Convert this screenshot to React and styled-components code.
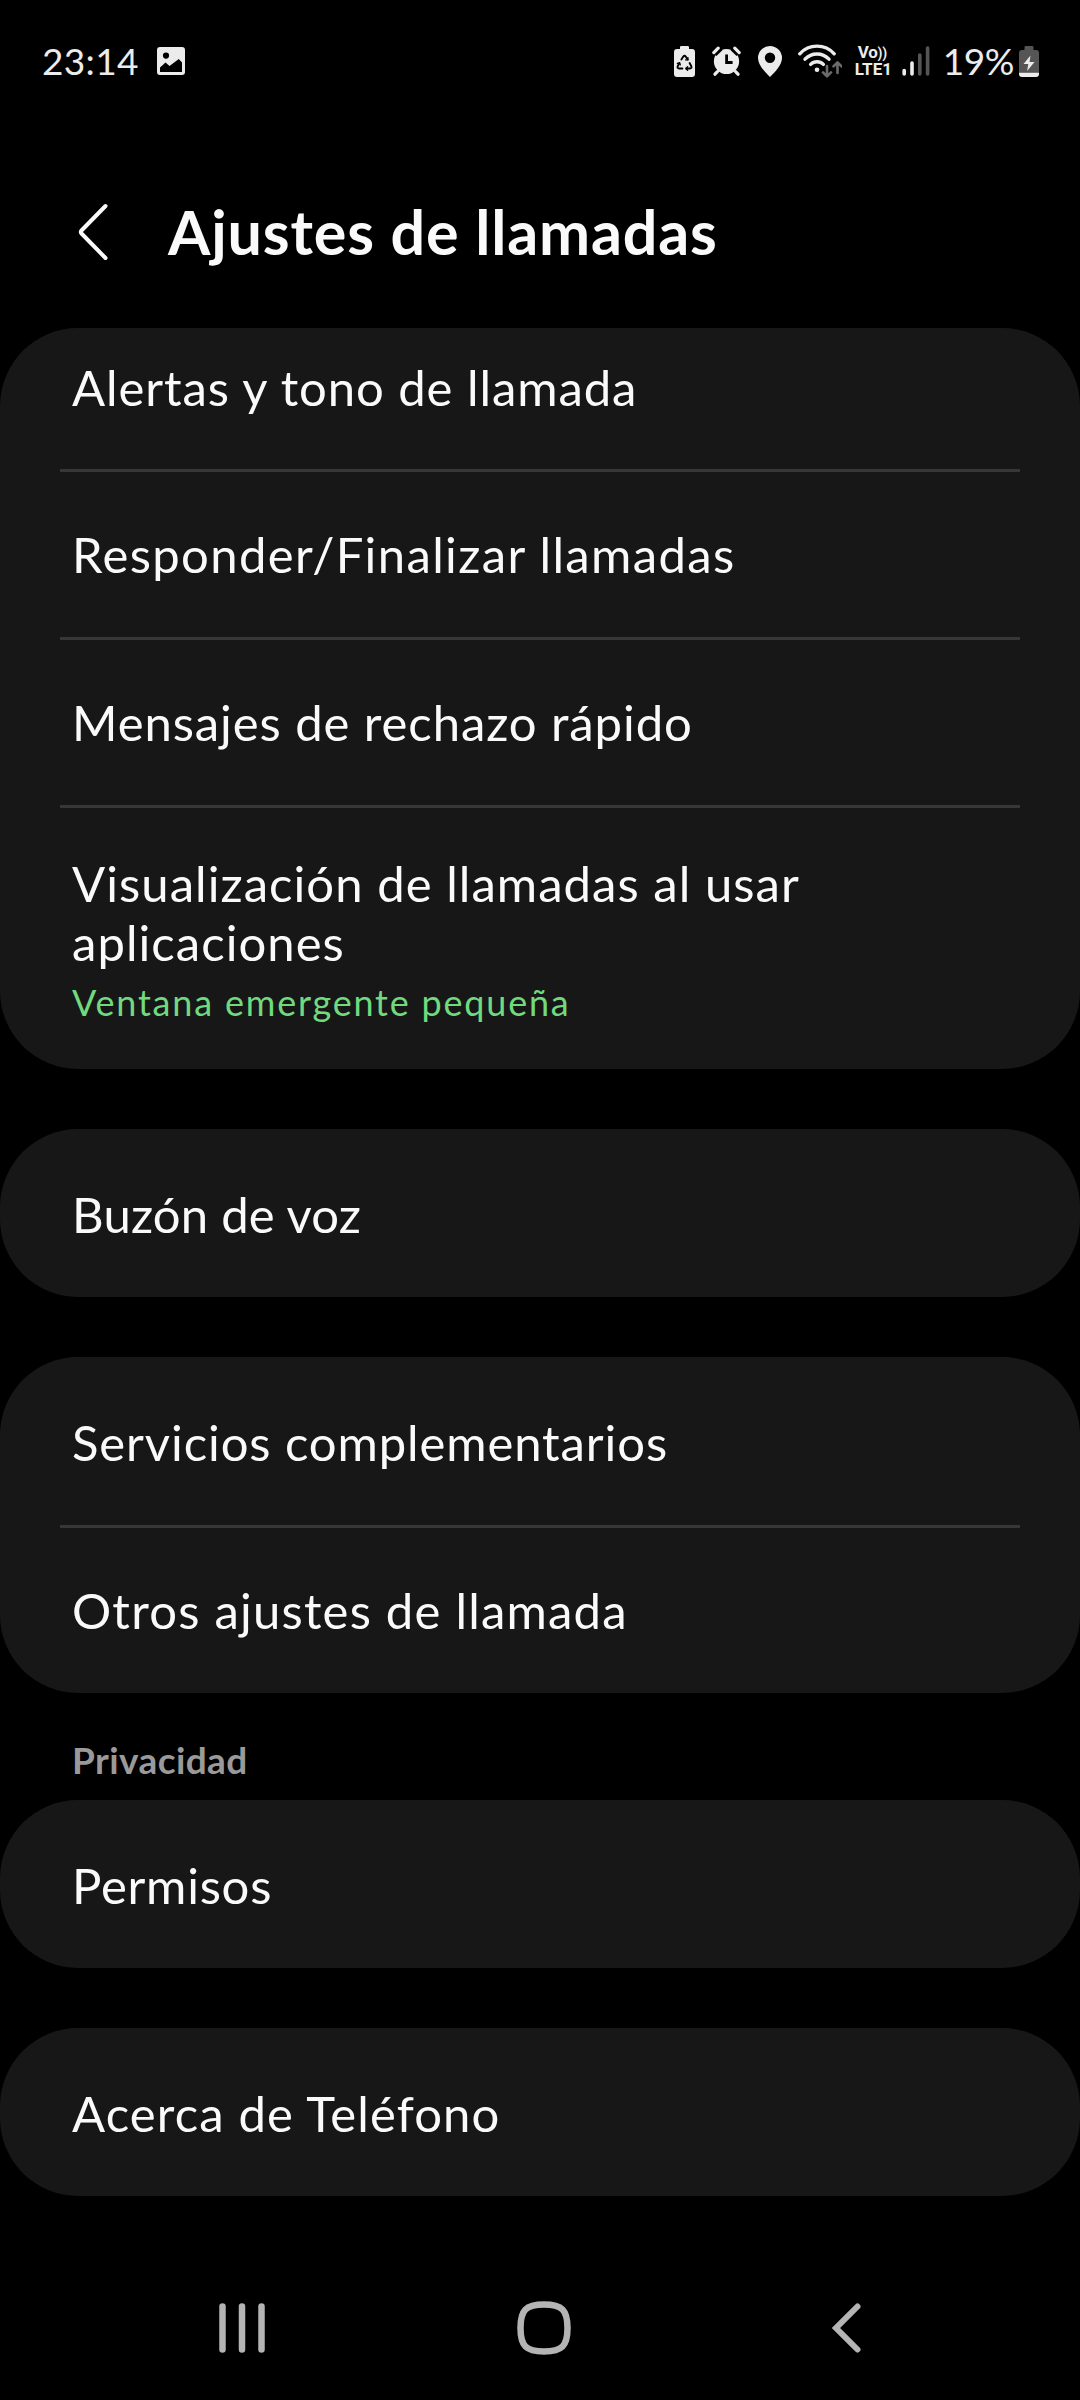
import styled, { createGlobalStyle, css } from "styled-components";

const GlobalStyle = createGlobalStyle`
  * {
    box-sizing: border-box;
  }

  body {
    margin: 0;
    background-color: #000;
    font-family: Lato, "Open Sans", sans-serif;
    color: #fafafa;
  }

  svg {
    display: block;
    flex: none;
  }
`;

const Screen = styled.div`
  display: flex;
  flex-direction: column;
  width: 1080px;
  height: 2400px;
  background-color: #000;
  overflow: hidden;
`;

const StatusBar = styled.div`
  display: flex;
  justify-content: space-between;
  align-items: center;
  height: 122px;
  padding: 0 41px 0 42px;
  color: #ececec;
`;

const StatusGroup = styled.div`
  display: flex;
  align-items: center;
`;

const StatusText = styled.span`
  font-size: 37px;
  line-height: 44px;
  letter-spacing: ${props => props.$spacing || 0}px;
`;

const ImageIcon = styled.svg`
  margin-left: 18px;
`;

const IconStrip = styled.div`
  display: flex;
  align-items: center;
  gap: 17px;

  svg:nth-child(4) {
    margin-left: -1px;
  }
`;

const VolteBadge = styled.div`
  display: flex;
  flex-direction: column;
  width: 40px;
  margin-left: 13px;
  font-family: Roboto, sans-serif;
  font-size: 17px;
  font-weight: 700;
  line-height: 17px;
  white-space: nowrap;
`;

const VolteTop = styled.span`
  height: 17px;
  padding-left: 3px;
  letter-spacing: -.3px;

  small {
    font-size: 14px;
    line-height: 14px;
  }
`;

const SignalBars = styled.svg`
  margin-left: 7px;
`;

const Percent = styled(StatusText)`
  margin-left: 13px;
`;

const ChargingIcon = styled.svg`
  margin-left: 5px;
`;

const Header = styled.header`
  display: flex;
  align-items: center;
  height: 206px;
  padding: 14px 72px 0 77px;
`;

const Title = styled.h1`
  margin: 0 0 0 59px;
  font-size: 61px;
  font-weight: 700;
  line-height: 74px;
  letter-spacing: .86px;
`;

const List = styled.main`
  display: flex;
  flex-direction: column;
`;

const Card = styled.section`
  padding: 0 60px;
  background-color: #171717;
  border-radius: 78px;

  & + & {
    margin-top: 60px;
  }
`;

const Row = styled.div`
  display: flex;
  flex-direction: column;
  justify-content: center;
  height: ${props => props.$height || 168}px;
  padding: ${props => props.$padding || "2px 12px 0"};

  & + & {
    box-shadow: inset 0 3px #373737;
  }
`;

const rowText = css`
  letter-spacing: ${props => props.$spacing}px;
  white-space: pre-line;
`;

const RowTitle = styled.span`
  ${rowText}
  font-size: 49px;
  line-height: 59px;
`;

const RowValue = styled.span`
  ${rowText}
  margin-top: 8px;
  color: #71d97e;
  font-size: 36px;
  line-height: 44px;
`;

const SectionLabel = styled.h2`
  height: 107px;
  margin: 0;
  padding: 45px 72px 0;
  color: #9a9a9a;
  font-size: 37px;
  font-weight: 700;
  line-height: 44px;
  letter-spacing: .4px;
`;

const NavBar = styled.nav`
  display: flex;
  justify-content: space-between;
  align-items: center;
  height: 144px;
  margin-top: auto;
  padding: 0 218px;
`;

const cards = [
  [
    { title: "Alertas y tono de llamada", spacing: .93, height: 141, padding: "0 12px 23px" },
    { title: "Responder/Finalizar llamadas", spacing: 1.36 },
    { title: "Mensajes de rechazo rápido", spacing: .92 },
    {
      title: "Visualización de llamadas al usar\naplicaciones",
      spacing: 1.05,
      value: "Ventana emergente pequeña",
      height: 264,
      padding: "4px 12px 0",
    },
  ],
  [{ title: "Buzón de voz", spacing: .22 }],
  [
    { title: "Servicios complementarios", spacing: .9 },
    { title: "Otros ajustes de llamada", spacing: 1.22 },
  ],
];

const privacyCards = [
  [{ title: "Permisos", spacing: .75 }],
  [{ title: "Acerca de Teléfono", spacing: 1.13 }],
];

function StatusIcons () {
  return (
    <IconStrip>
      {/* battery saver */}
      <svg width="21" height="31" viewBox="0 0 21 31">
        <path fill="#ececec" d="M6 3V1.2Q6 0 7.2 0h6.6Q15 0 15 1.2V3h3q3 0 3 3v22q0 3-3 3H3q-3 0-3-3V6q0-3 3-3z" />
        <g fill="none" stroke="#000" strokeWidth="1.9" strokeLinecap="round" strokeLinejoin="round">
          <path d="M7.4 13.6 9.3 10.6q1.2-1.6 2.4 0l1.9 3M15.6 17l1.7 3.2q.8 2.2-1.4 2.3h-3.6M8.4 22.5H5.1q-2.2-.1-1.4-2.3L5.400 17" />
          <path d="M13.9 11.6v2.3h-2.3M13.6 20.8l-1.7 1.7 1.7 1.7M3.4 17.4l2.1-.6.8 2.1" strokeWidth="1.4" />
        </g>
      </svg>

      {/* alarm */}
      <svg width="29" height="30" viewBox="0 0 29 30">
        <circle cx="14.5" cy="15.5" r="12.6" fill="#ececec" />
        <path d="M5.4 25.6 3 28.2M23.6 25.6l2.4 2.6" stroke="#ececec" strokeWidth="3.2" strokeLinecap="round" />
        <path d="M2 7.4 8 1.8M27 7.4l-6-5.600" stroke="#000" strokeWidth="7" />
        <path d="M1.800 6.600 6.200 2.200M27.200 6.600l-4.400-4.400" stroke="#ececec" strokeWidth="3.2" strokeLinecap="round" />
        <path d="M14.6 8.5v8h6" fill="none" stroke="#000" strokeWidth="2.8" />
      </svg>

      {/* location */}
      <svg width="24" height="31" viewBox="0 0 24 31">
        <path fill="#ececec" fillRule="evenodd" d="M12 0a12 12 0 0 1 12 12c0 7-7 14-12 19C7 26 0 19 0 12A12 12 0 0 1 12 0zm0 6.6a5.2 5.2 0 1 0 0 10.4 5.2 5.2 0 0 0 0-10.4z" />
      </svg>

      {/* wifi + traffic arrows */}
      <svg width="44" height="34" viewBox="0 0 44 34">
        <g fill="none" stroke="#ececec" strokeWidth="3.4" strokeLinecap="round">
          <path d="M1.8 9.8C11-.4 27-.4 36.2 9.8" />
          <path d="M7 15.2c6.6-7 17.4-7 24 0" />
          <path d="M12.6 20.4c3.6-3.6 9.2-3.6 12.8 0" />
        </g>
        <circle cx="19" cy="25.8" r="2.3" fill="#ececec" />
        <g fill="none" stroke="#6b6b6b" strokeWidth="2.6" strokeLinecap="round" strokeLinejoin="round">
          <path d="M29 22v10M25 28.4l4 4 4-4" />
          <path d="M39.5 29V19M35.5 22.4l4-4 4 4" />
        </g>
      </svg>
    </IconStrip>
  );
}

function SettingsCard ({ rows }) {
  return (
    <Card>
      {rows.map(row => (
        <Row key={row.title} $height={row.height} $padding={row.padding}>
          <RowTitle $spacing={row.spacing}>{row.title}</RowTitle>
          {row.value && <RowValue $spacing={1.8}>{row.value}</RowValue>}
        </Row>
      ))}
    </Card>
  );
}

function App () {
  return (
    <Screen>
      <GlobalStyle />
      <StatusBar>
        <StatusGroup>
          <StatusText $spacing={.34}>23:14</StatusText>
          <ImageIcon width="28" height="28" viewBox="0 0 28 28">
            <path fill="#ececec" fillRule="evenodd" d="M3 0h22q3 0 3 3v22q0 3-3 3H3q-3 0-3-3V3q0-3 3-3zM9 5.5a3.1 3.1 0 1 0 0 6.2 3.1 3.1 0 0 0 0-6.2zM3 20.500v4.500h22v-9.500L21.800 12l-9.300 7-4-3.500z" />
          </ImageIcon>
        </StatusGroup>
        <StatusGroup>
          <StatusIcons />
          <VolteBadge>
            <VolteTop>Vo<small>))</small></VolteTop>
            <span>LTE1</span>
          </VolteBadge>
          <SignalBars width="28" height="30" viewBox="0 0 28 30">
            <g strokeWidth="3.6" strokeLinecap="round">
              <path d="M2.2 24.5V28M10 17v11" stroke="#ececec" />
              <path d="M17.8 9v19M25.600 2v26" stroke="#555" />
            </g>
          </SignalBars>
          <Percent $spacing={-.46}>19%</Percent>
          <ChargingIcon width="20" height="31" viewBox="0 0 20 31">
            <path fill="#555" d="M5.5 4V1.2Q5.5 0 6.7 0h6.6q1.2 0 1.2 1.2V4H17q3 0 3 3v19H0V7q0-3 3-3z" />
            <path fill="#ececec" d="M0 26.500h20V28q0 3-3 3H3q-3 0-3-3zM11.5 9.5 4.5 18h4.800l-1.200 7 7.400-9h-5z" />
          </ChargingIcon>
        </StatusGroup>
      </StatusBar>

      <Header>
        <svg width="32" height="60" viewBox="0 0 32 60">
          <path d="M28.5 4 4.5 28.5q-1.500 1.500 0 3L28.5 56" fill="none" stroke="#fafafa" strokeWidth="4" strokeLinecap="round" strokeLinejoin="round" />
        </svg>
        <Title>Ajustes de llamadas</Title>
      </Header>

      <List>
        {cards.map(rows => <SettingsCard key={rows[0].title} rows={rows} />)}
        <SectionLabel>Privacidad</SectionLabel>
        {privacyCards.map(rows => <SettingsCard key={rows[0].title} rows={rows} />)}
      </List>

      <NavBar>
        <svg width="48" height="52" viewBox="0 0 48 52">
          <path d="M4.5 4.5v43M24 4.5v43M43.5 4.5v43" stroke="#b4b4b4" strokeWidth="6.5" strokeLinecap="round" />
        </svg>
        <svg width="54" height="54" viewBox="0 0 54 54">
          <path d="M27 3.5C45 3.5 50.5 9 50.5 27S45 50.5 27 50.5 3.5 45 3.5 27 9 3.5 27 3.5z" fill="none" stroke="#b4b4b4" strokeWidth="6.5" />
        </svg>
        <svg width="40" height="52" viewBox="-9 0 40 52">
          <path d="M26.5 4.5 5 26l21.5 21.5" fill="none" stroke="#b4b4b4" strokeWidth="6" strokeLinecap="round" />
        </svg>
      </NavBar>
    </Screen>
  );
}

export default App;
